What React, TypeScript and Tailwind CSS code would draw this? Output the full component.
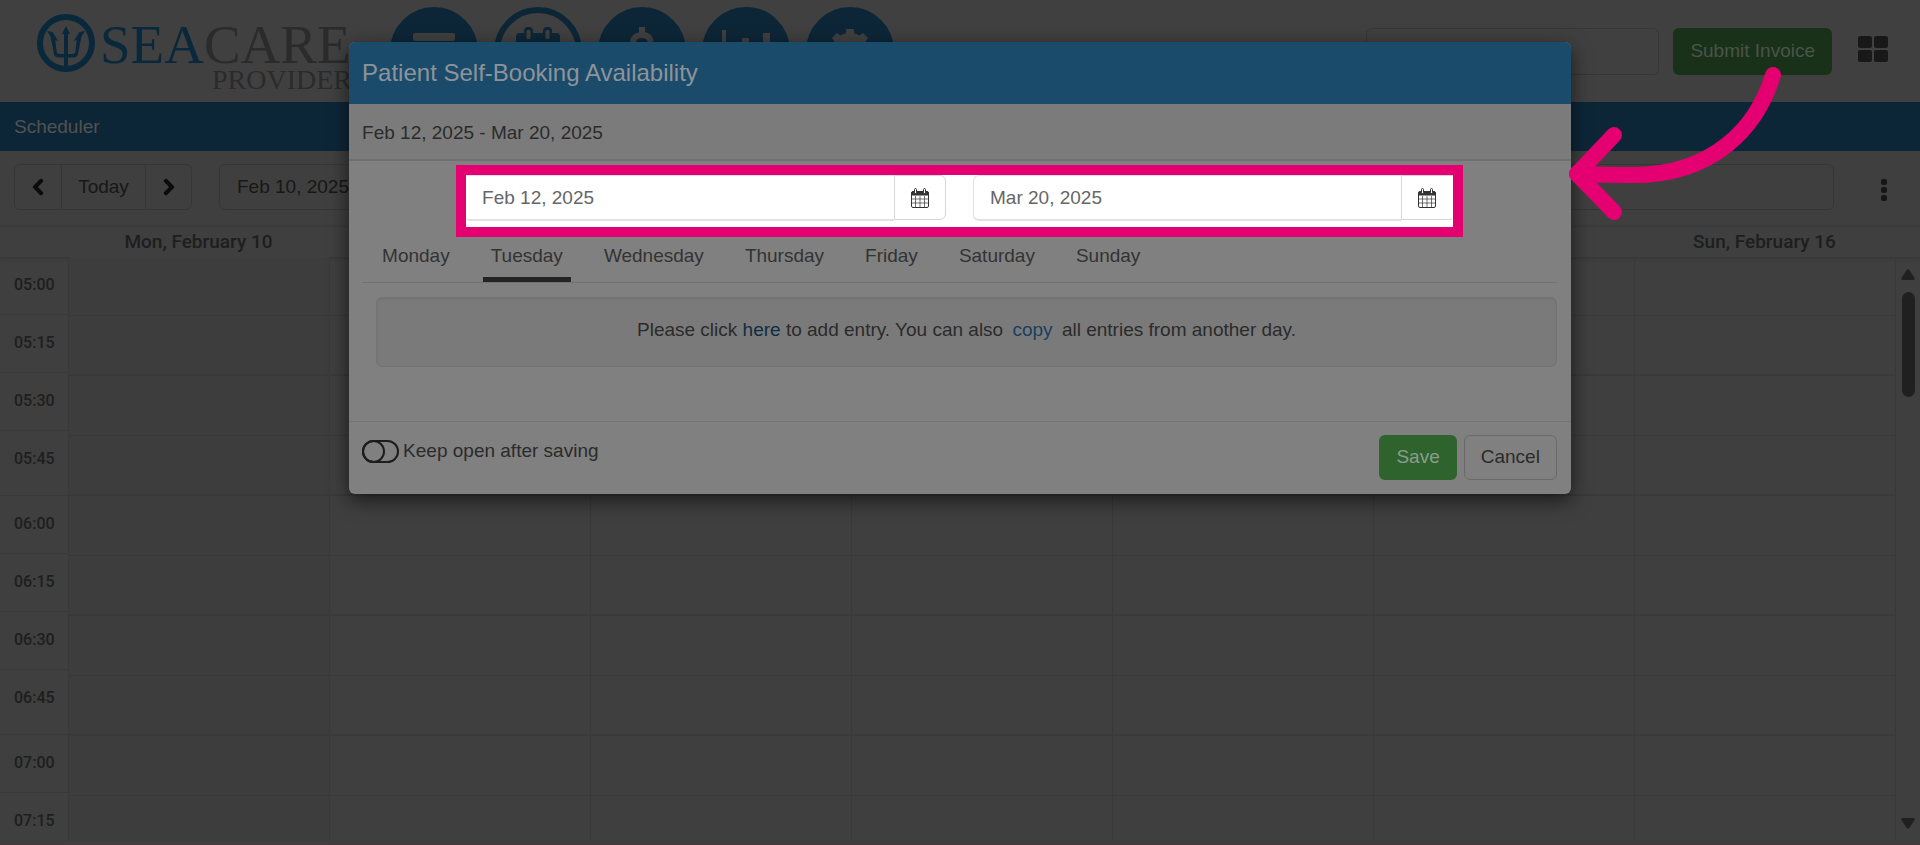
import React from "react";
import { FaChevronLeft, FaChevronRight, FaSearch } from "react-icons/fa";

const times = [
  "05:00",
  "05:15",
  "05:30",
  "05:45",
  "06:00",
  "06:15",
  "06:30",
  "06:45",
  "07:00",
  "07:15",
];

// days without a label sit behind the dialog
const days = [
  { id: 10, label: "Mon, February 10" },
  { id: 11, label: "" },
  { id: 12, label: "" },
  { id: 13, label: "" },
  { id: 14, label: "" },
  { id: 15, label: "" },
  { id: 16, label: "Sun, February 16" },
];

const weekDays = [
  "Monday",
  "Tuesday",
  "Wednesday",
  "Thursday",
  "Friday",
  "Saturday",
  "Sunday",
];

const Logo = () => {
  return (
    <div className="flex w-[320px] ml-[37px] mt-3.5 shrink-0 font-['Liberation_Serif',serif]">
      <svg viewBox="0 0 58 58" className="w-[58px] h-[58px] shrink-0 text-[#09283b]">
        <circle cx="29" cy="29" r="26" fill="none" stroke="currentColor" strokeWidth="6" />
        <path
          fill="currentColor"
          d="M29 12l4 8h-2v20h4c2.500 0 3.300-1 3.500-3.500l1.200-10.500-3 1L42.500 18l5.500-1-3.500 5.500-3.500 17.500c-.6 2.600-2 3.500-4.500 3.500h-5.500V56h-4V43.500h-5.500c-2.500 0-3.900-.9-4.500-3.500l-3.500-17.500L10 17l5.500 1 5.800 9-3-1 1.200 10.500c.2 2.500 1 3.500 3.500 3.500h4V20h-2z"
        />
      </svg>
      <div className="flex flex-col ml-[5px] mt-2">
        <span className="text-[55px] leading-[46px] text-[#2b2b2b]">
          <span className="text-[#09283b]">SEA</span>CARE
        </span>
        <span className="text-[28px] leading-6 ml-28 text-[#2b2b2b]">PROVIDER</span>
      </div>
    </div>
  );
};

const MenuIcon = () => {
  return (
    <svg viewBox="0 0 48 48" className="w-12 h-12" fill="currentColor">
      <rect x="3" y="6" width="42" height="8" rx="2" />
      <rect x="3" y="20" width="42" height="8" rx="2" />
      <rect x="3" y="34" width="42" height="8" rx="2" />
    </svg>
  );
};

const SchedulerIcon = () => {
  return (
    <svg viewBox="0 0 48 48" className="w-12 h-12" fill="currentColor">
      <path d="M6 6H42Q46 6 46 10V42Q46 46 42 46H6Q2 46 2 42V10Q2 6 6 6M6 17V42H42V17z" fillRule="evenodd" />
      <rect x="10" y="0" width="9" height="15" rx="4" />
      <rect x="29" y="0" width="9" height="15" rx="4" />
      <rect x="12.500" y="3" width="4" height="9" rx="1.500" fill="#404040" />
      <rect x="31.500" y="3" width="4" height="9" rx="1.500" fill="#404040" />
    </svg>
  );
};

const DollarIcon = () => {
  return (
    <svg viewBox="0 0 48 48" className="w-12 h-12" fill="none" stroke="currentColor" strokeWidth="6">
      <path d="M24 0v8M24 40v8M33 15c-1-5-4.500-7-9-7-5.500 0-9 3-9 7.500 0 10 19 6 19 16.500 0 5-4 8-10 8-5.500 0-9-2.500-10-8" />
    </svg>
  );
};

const ChartIcon = () => {
  return (
    <svg viewBox="0 0 48 48" className="w-12 h-12" fill="currentColor">
      <path d="M0 3h4v38h44v4H0zM20 11h7v26h-7zM41 6h7v31h-7zM31 22h6v15h-6zM10 25h7v12h-7z" />
    </svg>
  );
};

const CogIcon = () => {
  return (
    <svg viewBox="0 0 48 48" className="w-12 h-12" fill="currentColor">
      <circle cx="24" cy="24" r="13" fill="none" stroke="currentColor" strokeWidth="10" />
      {[0, 45, 90, 135, 180, 225, 270, 315].map((angle) => (
        <path key={angle} d="M20.500 2h7l1.500 8H19z" transform={`rotate(${angle} 24 24)`} />
      ))}
    </svg>
  );
};

const CalendarIcon = () => {
  return (
    <svg viewBox="0 0 18 20" className="w-[18px] h-5" fill="none" stroke="#333">
      <rect x="0.500" y="3.500" width="17" height="16" rx="1.500" />
      <path d="M1 4h16v3H1z" fill="#333" />
      <path d="M4.500 8v11M9 8v11M13.500 8v11M1 11h16M1 15h16" strokeWidth="0.700" />
      <rect x="3.500" y="0.500" width="2" height="5" rx="1" fill="#fff" />
      <rect x="12.500" y="0.500" width="2" height="5" rx="1" fill="#fff" />
    </svg>
  );
};

const navItems = [
  { name: "Menu", icon: <MenuIcon /> },
  { name: "Scheduler", icon: <SchedulerIcon /> },
  { name: "Billing", icon: <DollarIcon /> },
  { name: "Reports", icon: <ChartIcon /> },
  { name: "Settings", icon: <CogIcon /> },
];

const Header = () => {
  return (
    <header className="flex h-[102px] shrink-0 bg-[#404040]">
      <Logo />
      <nav className="flex gap-4 ml-[33px] mt-[7px]">
        {navItems.map(({ name, icon }) => (
          <a
            key={name}
            href={`#${name.toLowerCase()}`}
            aria-label={name}
            className={`flex w-[88px] h-[88px] items-center justify-center rounded-full border-6 border-[#0d2637] ${
              name === "Scheduler" ? "text-[#0d2637]" : "bg-[#0d2637] text-[#404040]"
            }`}
          >
            {icon}
          </a>
        ))}
      </nav>
      <div className="flex ml-auto mt-7 mr-8 items-start">
        <label className="flex w-[293px] h-[47px] px-3.5 items-center rounded-md border border-[#363636]">
          <FaSearch className="w-5 h-5 text-[#1c1c1c]" />
          <input aria-label="Search" className="w-full ml-2 bg-transparent outline-none" />
        </label>
        <button className="ml-3.5 px-[17px] h-[47px] rounded-md bg-[#193119] text-[#4a544a]">
          Submit Invoice
        </button>
        <button aria-label="Apps" className="grid grid-cols-2 gap-0.5 w-[30px] ml-[26px] mt-2">
          {[...Array(4)].map((_, index) => (
            <span key={index} className="h-3 rounded-xs bg-[#181818]" />
          ))}
        </button>
      </div>
    </header>
  );
};

const Toolbar = () => {
  return (
    <div className="flex h-[75px] shrink-0 px-3.5 py-[13px] text-[#171717]">
      <div className="flex h-[46px] rounded-md border border-[#363636]">
        <button aria-label="Previous week" className="w-[46px] text-[#0c0c0c]">
          <FaChevronLeft className="w-[18px] h-[18px] mx-auto stroke-current stroke-[36]" />
        </button>
        <button className="w-[85px] border-x border-[#363636]">Today</button>
        <button aria-label="Next week" className="w-[45px] text-[#0c0c0c]">
          <FaChevronRight className="w-[18px] h-[18px] mx-auto stroke-current stroke-[36]" />
        </button>
      </div>
      <input
        aria-label="Week"
        defaultValue="Feb 10, 2025"
        className="flex-1 h-[46px] ml-[27px] px-[17px] rounded-md border border-[#363636] bg-transparent"
      />
      <button aria-label="More" className="flex flex-col gap-0.5 ml-[47px] mr-[19px] pt-[15px]">
        {[...Array(3)].map((_, index) => (
          <span key={index} className="w-1.5 h-1.5 rounded-xs bg-[#161616]" />
        ))}
      </button>
    </div>
  );
};

const Calendar = () => {
  return (
    <div className="flex flex-col flex-1 min-h-0 pb-[3px] font-[Roboto,sans-serif] font-medium text-[#1e1e1e]">
      <div className="flex h-[31px] shrink-0 pl-[68px] pr-[25px] border-t border-[#393939] shadow-[0_2px_3px_#383838]">
        {days.map((day) => (
          <div key={day.id} className="flex-1 text-center leading-[30px]">
            {day.label}
          </div>
        ))}
      </div>
      <div className="flex flex-1 min-h-0 overflow-hidden">
        <div className="w-[68px] shrink-0 text-base">
          {times.map((time) => (
            <div
              key={time}
              className={`border-b border-[#393939] pl-3.5 pt-4 leading-6 ${
                time.endsWith("45") ? "h-[65px]" : "h-[58px]"
              }`}
            >
              {time}
            </div>
          ))}
        </div>
        {days.map((day, index) => (
          <div
            key={day.id}
            className={`flex-1 border-l border-[#393939] ${index === 0 ? "bg-[#3d3d3d]" : ""}`}
          >
            {times.map((time, row) => (
              <div
                key={time}
                className={`border-[#393939] ${row === 0 ? "h-[59px]" : "h-[60px]"} ${
                  row % 2 === 0 ? "border-b" : "border-b-2"
                }`}
              />
            ))}
          </div>
        ))}
        <div className="flex flex-col items-center w-[25px] shrink-0 border-l border-[#393939] pt-3 pb-3">
          <svg viewBox="0 0 14 11" className="w-3.5 h-[11px]" fill="#202020">
            <path d="M5.500 1.200Q7-.6 8.500 1.200L13.500 9Q14 11 12 11H2Q0 11 .5 9z" />
          </svg>
          <div className="w-[13px] h-[105px] mt-3 rounded-full bg-[#202020]" />
          <svg viewBox="0 0 14 11" className="w-3.5 h-[11px] mt-auto" fill="#202020">
            <path d="M5.500 9.800Q7 11.600 8.500 9.800L13.500 2Q14 0 12 0H2Q0 0 .5 2z" />
          </svg>
        </div>
      </div>
    </div>
  );
};

interface IDateField {
  label: string;
  value: string;
  inputClass: string;
  buttonClass: string;
}

const DateField = ({ label, value, inputClass, buttonClass }: IDateField) => {
  return (
    <div className="flex flex-1 items-start">
      <input
        aria-label={label}
        defaultValue={value}
        className={`flex-1 min-w-0 h-[46px] border-t border-b-2 border-[#e2e2e2] bg-white text-[#666] ${inputClass}`}
      />
      <button
        aria-label={`Pick ${label}`}
        className={`flex w-[52px] h-[45px] items-center justify-center border-y border-l border-[#d5d5d5] bg-white ${buttonClass}`}
      >
        <CalendarIcon />
      </button>
    </div>
  );
};

const Arrow = () => {
  return (
    <svg
      viewBox="0 0 216 160"
      className="absolute left-full top-6 -ml-1 w-[216px] h-40"
      fill="none"
      stroke="#e50072"
      strokeWidth="16"
      strokeLinecap="round"
      strokeLinejoin="round"
    >
      <path d="M206 9C190 62 146 109 66 109Q38 109 10 108" />
      <path d="M47 69L10 108L47 146" />
    </svg>
  );
};

const BookingDialog = () => {
  return (
    <div
      role="dialog"
      aria-labelledby="dialog-title"
      className="relative w-7/11 h-fit mt-[42px] rounded-md bg-[#808080] text-[#2b2b2b] shadow-[0_6px_20px_rgba(0,0,0,0.6)]"
    >
      <h1
        id="dialog-title"
        className="px-[13px] rounded-t-md bg-[#1b4b6b] text-2xl leading-[62px] text-[#8d9499]"
      >
        Patient Self-Booking Availability
      </h1>
      <div className="h-[57px] px-[13px] bg-[#7b7b7b] border-b-2 border-[#707070] leading-[57px]">
        Feb 12, 2025 - Mar 20, 2025
      </div>
      <div className="pl-[13px] pr-3.5 pt-1">
        <div className="flex gap-[27px] h-[72px] mx-[94px] border-10 border-[#e50072] bg-white overflow-hidden">
          <DateField
            label="Start date"
            value="Feb 12, 2025"
            inputClass="px-4 rounded-bl-sm"
            buttonClass="border-r rounded-r-md"
          />
          <DateField
            label="End date"
            value="Mar 20, 2025"
            inputClass="px-4 border-l rounded-l-md"
            buttonClass="rounded-br-sm"
          />
        </div>
        <div role="tablist" className="flex gap-[25px] pl-3 border-b border-[#727272] text-[#333]">
          {weekDays.map((day) => (
            <button
              key={day}
              role="tab"
              aria-selected={day === "Tuesday"}
              className={`h-[45px] px-2 pb-0.5 border-b-5 ${
                day === "Tuesday" ? "border-[#232323]" : "border-transparent"
              }`}
            >
              {day}
            </button>
          ))}
        </div>
        <div className="h-[70px] ml-3.5 mt-3.5 rounded-md border border-[#737373] bg-[#7a7a7a] text-center leading-[64px] shadow-[inset_0_1px_2px_#707070]">
          Please click{" "}
          <a href="#add" className="text-[#0f2c45]">
            here
          </a>{" "}
          to add entry. You can also{" "}
          <a href="#copy" className="mx-1 text-[#1a3f5f]">
            copy
          </a>{" "}
          all entries from another day.
        </div>
      </div>
      <div className="flex items-start justify-between mt-[54px] pl-[13px] pr-3.5 pt-[13px] pb-3.5 border-t border-[#747474]">
        <label className="flex items-center gap-1 mt-0.5">
          <span className="relative w-[37px] h-[23px]">
            <input
              type="checkbox"
              className="block appearance-none w-full h-full rounded-full border-2 border-[#1c1c1c]"
            />
            <span className="absolute left-0 top-0 w-[23px] h-[23px] rounded-full border-2 border-[#1c1c1c]" />
          </span>
          Keep open after saving
        </label>
        <div className="flex gap-[7px]">
          <button className="h-[45px] px-[17px] rounded-md bg-[#2e632e] text-[#8b9c8b]">Save</button>
          <button className="h-[45px] px-4 rounded-md border border-[#6a6a6a]">Cancel</button>
        </div>
      </div>
      <Arrow />
    </div>
  );
};

const App = () => {
  return (
    <div className="relative flex flex-col h-screen overflow-hidden border-b border-[#45393f] bg-[#3f3f3f] font-['Liberation_Sans',Arial,sans-serif] text-[19px]">
      <Header />
      <div className="h-[49px] shrink-0 px-3.5 bg-[#0d2637] leading-[49px] text-[#525252]">Scheduler</div>
      <Toolbar />
      <Calendar />
      <div className="absolute inset-0 flex justify-center items-start">
        <BookingDialog />
      </div>
    </div>
  );
};

export default App;
